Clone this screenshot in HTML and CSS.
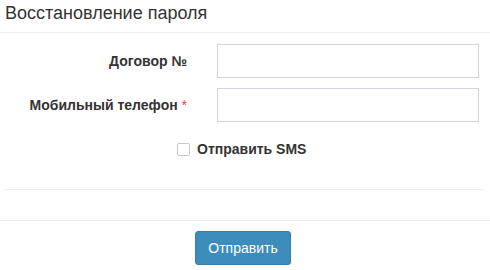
FILE: index.html
```html
<!DOCTYPE html>
<html>
<head>
  <title>Восстановление пароля</title>
  <link rel="stylesheet" href="styles.css">
</head>
<body>
  <div class="modal">
    <div class="modal-header">
      <h4 class="modal-title">Восстановление пароля</h4>
    </div>
    <form class="modal-body">
      <div class="form-group">
        <label class="control-label" for="contract">Договор №</label>
        <input type="text" id="contract" class="form-control">
      </div>
      <div class="form-group">
        <label class="control-label" for="phone">Мобильный телефон <span class="required">*</span></label>
        <input type="text" id="phone" class="form-control">
      </div>
      <div class="checkbox-row">
        <label>
          <input type="checkbox">
          <span class="checkmark"></span>
          Отправить SMS
        </label>
      </div>
      <hr>
    </form>
    <div class="modal-footer">
      <button type="submit" class="btn-primary">Отправить</button>
    </div>
  </div>
</body>
</html>
```

FILE: styles.css
```css
body {
  margin: 0;
  padding: 0;
  font-family: "Liberation Sans", Arial, sans-serif;
  font-size: 14px;
  color: #333;
  background-color: #fff;
}

.modal-header {
  height: 33px;
  border-bottom: 1px solid #eeeeee;
  box-sizing: border-box;
  padding: 1px 5px 0;
}

.modal-title {
  margin: 0;
  font-size: 18px;
  font-weight: normal;
  line-height: 24px;
}

.modal-body {
  padding: 11px 6px 0 4px;
}

.form-group {
  display: flex;
  align-items: center;
  margin-bottom: 10px;
}

.control-label {
  width: 198px;
  padding-right: 15px;
  box-sizing: border-box;
  text-align: right;
  font-weight: bold;
}

.required {
  color: #dd4b39;
  font-weight: normal;
}

.form-control {
  width: 262px;
  height: 34px;
  box-sizing: border-box;
  margin-left: 15px;
  border: 1px solid #d2d6de;
  border-radius: 0;
  padding: 6px 12px;
  font-size: 14px;
}

.checkbox-row {
  padding: 9px 0 0 173px;
  height: 44px;
}

.checkbox-row label {
  display: flex;
  align-items: center;
  font-weight: bold;
}

.checkbox-row input[type="checkbox"] {
  display: none;
}

.checkbox-row .checkmark {
  display: inline-block;
  width: 11px;
  height: 11px;
  border: 1px solid #c8c8c8;
  border-radius: 2px;
  margin-right: 7px;
}

hr {
  margin: 4px 0 0;
  border: 0;
  border-top: 1px solid #eeeeee;
}

.modal-footer {
  margin-top: 30px;
  border-top: 1px solid #eeeeee;
  padding-top: 10px;
  text-align: center;
}

.btn-primary {
  width: 96px;
  height: 34px;
  margin-left: -4px;
  background-color: #3c8dbc;
  border: 1px solid #367fa9;
  border-radius: 3px;
  color: #fff;
  font-family: "Liberation Sans", Arial, sans-serif;
  font-size: 14px;
  cursor: pointer;
}
```
